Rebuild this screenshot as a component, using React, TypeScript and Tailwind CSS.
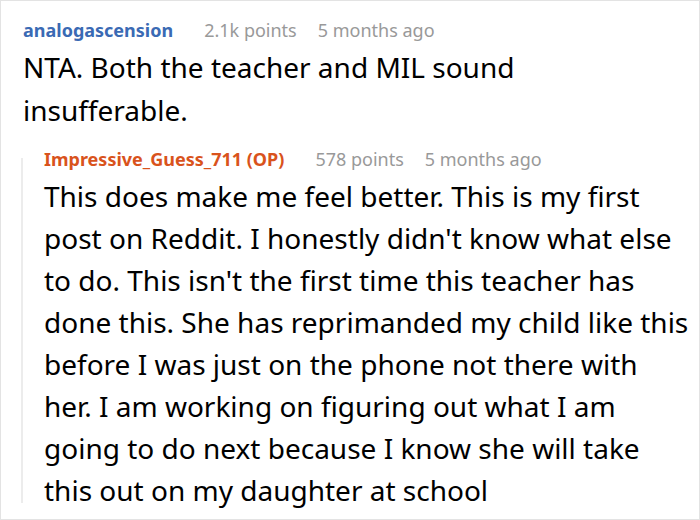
const FONT = { fontFamily: '"Noto Sans", "Open Sans", sans-serif' };

const REPLY_LINES = [
  'This does make me feel better. This is my first',
  "post on Reddit. I honestly didn't know what else",
  "to do. This isn't the first time this teacher has",
  'done this. She has reprimanded my child like this',
  'before I was just on the phone not there with',
  'her. I am working on figuring out what I am',
  'going to do next because I know she will take',
  'this out on my daughter at school',
];

function Meta({ name, points, age, color }: { name: string; points: string; age: string; color: string }) {
  return (
    <div className="flex items-baseline text-[18px] leading-[24px] whitespace-nowrap">
      <span className={`font-bold ${color}`}>{name}</span>
      <span className="ml-[31px] text-[#999999]">{points}</span>
      <span className="ml-[21px] text-[#999999]">{age}</span>
    </div>
  );
}

export default function App() {
  return (
    <div className="w-[700px] h-[520px] bg-white border border-[#e3e3e3] overflow-hidden" style={FONT}>
      <div className="pl-[22px] pt-[17px]">
        <Meta name="analogascension" points="2.1k points" age="5 months ago" color="text-[#3a6ab4]" />
        <p className="mt-[4px] text-[28px] leading-[43px] text-black">
          NTA. Both the teacher and MIL sound
          <br />
          insufferable.
        </p>
      </div>
      <div className="ml-[20px] mt-[15px] flex">
        <div className="w-[2px] mt-[11px] mb-[8px] bg-[#ececec]" />
        <div className="pl-[21px]">
          <Meta name="Impressive_Guess_711 (OP)" points="578 points" age="5 months ago" color="text-[#d9531c]" />
          <p className="mt-[4px] text-[28px] leading-[42px] text-black">
            {REPLY_LINES.map((line) => (
              <span key={line} className="block whitespace-nowrap">
                {line}
              </span>
            ))}
          </p>
        </div>
      </div>
    </div>
  );
}
